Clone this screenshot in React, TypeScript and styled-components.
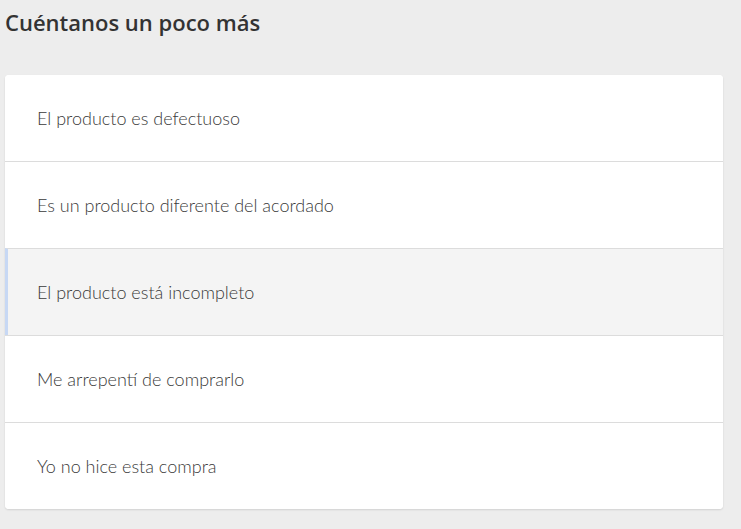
import styled, { createGlobalStyle } from "styled-components";

const GlobalStyle = createGlobalStyle`
  html, body {
    margin: 0;
    padding: 0;
    background: #ededed;
  }
  body {
    font-family: Lato, "Open Sans", "Liberation Sans", sans-serif;
  }
`;

const Page = styled.main`
  padding: 8px 18px 20px 5px;
`;

const Title = styled.h2`
  margin: 0 0 39px;
  font-family: "Open Sans", Lato, sans-serif;
  font-size: 22px;
  font-weight: 600;
  line-height: 28px;
  color: #333;
`;

const Card = styled.ul`
  list-style: none;
  margin: 0;
  padding: 0;
  background: #fff;
  border-radius: 4px;
  box-shadow: 0 1px 2px rgba(0, 0, 0, 0.12);
  overflow: hidden;
`;

const Option = styled.li<{ $active?: boolean }>`
  display: flex;
  align-items: center;
  height: 86px;
  padding-left: ${({ $active }) => ($active ? "29px" : "32px")};
  border-left: ${({ $active }) => ($active ? "3px solid #c7d8f4" : "none")};
  background: ${({ $active }) => ($active ? "#f4f4f4" : "#fff")};
  font-size: 18px;
  font-weight: 300;
  color: #3a3a3a;
  cursor: pointer;

  & + & {
    border-top: 1px solid #dcdcdc;
  }
`;

const options = [
  "El producto es defectuoso",
  "Es un producto diferente del acordado",
  "El producto está incompleto",
  "Me arrepentí de comprarlo",
  "Yo no hice esta compra",
];

export default function App() {
  return (
    <>
      <GlobalStyle />
      <Page>
        <Title>Cuéntanos un poco más</Title>
        <Card>
          {options.map((text, i) => (
            <Option key={text} $active={i === 2}>
              {text}
            </Option>
          ))}
        </Card>
      </Page>
    </>
  );
}
